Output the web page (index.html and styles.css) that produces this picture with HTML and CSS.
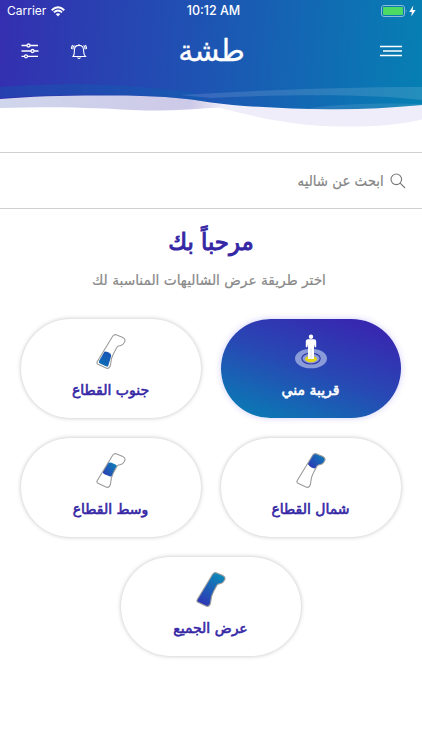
FILE: index.html
```
<!DOCTYPE html>
<html lang="ar" dir="rtl">
<head>
<meta charset="utf-8">
<title>طشة</title>
<link rel="stylesheet" href="styles.css">
</head>
<body>
<svg class="defs" width="0" height="0" aria-hidden="true">
  <defs>
    <linearGradient id="fill" gradientUnits="userSpaceOnUse" x1="5" y1="34" x2="24" y2="2"><stop offset="0" stop-color="#3032b5"/><stop offset="1" stop-color="#0b8ab8"/></linearGradient>
    <linearGradient id="fill-south" gradientUnits="userSpaceOnUse" x1="5" y1="34" x2="14" y2="18"><stop offset="0" stop-color="#0c72b8"/><stop offset="1" stop-color="#1a52b4"/></linearGradient>
    <linearGradient id="fill-north" gradientUnits="userSpaceOnUse" x1="14" y1="14" x2="25" y2="3"><stop offset="0" stop-color="#2b3bb4"/><stop offset="1" stop-color="#1272b8"/></linearGradient>
    <linearGradient id="fill-mid" gradientUnits="userSpaceOnUse" x1="7" y1="21" x2="20" y2="11"><stop offset="0" stop-color="#2b40b4"/><stop offset="1" stop-color="#0f80b8"/></linearGradient>
    <path id="strip" d="M16.800 2Q18.800-.2 20.800 1L26.800 3.400Q29.300 4.500 29 6.800Q27.500 11.500 22.500 12Q21.300 12.300 20.500 14Q17 20 15.500 24.500Q14.800 29 14.500 31Q13.500 35 10.500 34.200L2 30.300Q.3 29.300 1.300 27.400Z"/>
    <clipPath id="strip-clip"><use href="#strip"/></clipPath>
  </defs>
</svg>
<header class="header">
  <svg class="header-bg" viewBox="0 0 422 130" aria-hidden="true">
    <defs>
      <linearGradient id="hg" gradientUnits="userSpaceOnUse" x1="0" y1="30" x2="422" y2="60"><stop offset="0" stop-color="#342fb0"/><stop offset=".5" stop-color="#1d55b3"/><stop offset="1" stop-color="#067fb3"/></linearGradient>
      <linearGradient id="wg" gradientUnits="userSpaceOnUse" x1="0" y1="0" x2="225" y2="0"><stop offset="0" stop-color="#d0d6ec"/><stop offset=".85" stop-color="#cdc9e8"/><stop offset="1" stop-color="#efedf9"/></linearGradient>
    </defs>
    <path fill="#efedf9" d="M190 98 H422 V119.500 C390 127 350 128 309 125 C265 120 240 113 208 105Z"/>
    <path fill="url(#wg)" d="M0 93 H190 L225 104 V107 C195 109 170 111 145 110.500 C110 109 80 107 40 107.300 L0 108Z"/>
    <path fill="url(#hg)" d="M0 0H422V105 C390 108 360 109.500 330 109.300 C290 109 245 107 211 102.500 C185 98 160 96 120 95.500 C75 95 35 96 0 99Z"/>
    <path fill="#0a66b0" opacity=".3" d="M0 87 C70 82 120 84 190 92 L211 102.500 C170 95 90 92 0 98Z"/>
    <path fill="#fff" opacity=".12" d="M180 95 C250 91 330 87 422 87 V100 C375 94 290 94 211 98Z"/>
    <path fill="#fff" opacity=".1" d="M310 108 C350 103 390 103 422 104 V105 C380 109 345 110 310 109Z"/>
  </svg>
  <div class="status" dir="ltr">
    <span class="carrier">Carrier
      <svg width="14" height="11" viewBox="0 0 14 11" fill="none" stroke="#fff" stroke-width="1.900"><path d="M.7 4.200 Q7-1.900 13.300 4.200M2.900 6.400 Q7 2.600 11.100 6.400"/><path d="M7 10.500 4.700 8.100Q7 6.300 9.300 8.100Z" fill="#fff" stroke="none"/></svg>
    </span>
    <span class="time">10:12 AM</span>
    <svg class="battery" width="37" height="13" viewBox="0 0 37 13"><rect x=".5" y=".5" width="23" height="11" rx="2.500" fill="none" stroke="#8abbdc"/><rect x="2" y="2" width="20" height="8" rx="1" fill="#4cd964"/><path d="M24.800 4.200q1.500 1.800 0 3.600z" fill="#8abbdc"/><path d="M32.300 .5 28.300 6.900h2.600L30.300 11.500 34.600 5h-2.900z" fill="#fff"/></svg>
  </div>
  <div class="nav" dir="ltr">
    <div class="tools">
      <svg width="18" height="16" viewBox="0 0 18 16" fill="none" stroke="#fff" stroke-width="1.300"><path d="M.5 2.500H6M9 2.500h8M.5 8H10M13 8h4.500M.5 13.300H3.500M6.500 13.300H17"/><circle cx="7.500" cy="2.500" r="1.500"/><circle cx="11.500" cy="8" r="1.500"/><circle cx="5" cy="13.300" r="1.500"/></svg>
      <svg width="16" height="17" viewBox="0 0 16 17" fill="none" stroke="#fff" stroke-width="1.100"><path d="M2 13.500C3.600 11.500 3.400 10 3.400 7.200C3.400 4 5.200 2.400 8 2.400s4.600 1.600 4.600 4.800c0 2.800-.2 4.300 1.800 6.300zM8 2.400V1M6.500 14.500q1.500 2 3 0M3.400 2.500Q1.700 4 1.900 6.400M1.700 2Q.4 3.500.5 6M12.600 2.500Q14.300 4 14.100 6.400M14.300 2Q15.600 3.500 15.500 6"/></svg>
    </div>
    <h1 class="logo" lang="ar">طشة</h1>
    <svg class="menu" width="22" height="12" viewBox="0 0 22 12" stroke="#fff" stroke-width="1.500"><path d="M0 1.500H22M3 6H22M0 10.500H22"/></svg>
  </div>
</header>
<div class="search">
  <svg width="16" height="16" viewBox="0 0 16 16" fill="none" stroke="#777" stroke-width="1.100"><circle cx="6.300" cy="6.300" r="5.300"/><path d="M10.200 10.200 15 15"/></svg>
  <span class="placeholder">ابحث عن شاليه</span>
</div>
<main>
  <h2 class="title">مرحباً بك</h2>
  <p class="subtitle">اختر طريقة عرض الشاليهات المناسبة لك</p>
  <div class="options">
    <div class="option active">
      <svg class="icon" viewBox="0 0 34 36"><ellipse cx="17" cy="24.500" rx="16" ry="9.800" fill="#8a9bd9"/><ellipse cx="17" cy="24.500" rx="9.200" ry="5.500" fill="none" stroke="#3439a8" stroke-width="1.200"/><ellipse cx="17" cy="25" rx="6" ry="3.300" fill="#e4d51b"/><circle cx="17" cy="2.800" r="2.200" fill="#fff"/><path fill="#fff" d="M14 5.300h6q2.200 0 2.200 2v6h-1.500l-.7-3V25h-6V10.300l-.7 3H11.800v-6q0-2 2.200-2z"/><path d="M17 14V25" stroke="#bdc1df" stroke-width=".5"/></svg>
      <span class="label">قريبة مني</span>
    </div>
    <div class="option">
      <svg class="icon" viewBox="0 0 30 36"><path d="M8.300 17.800Q9.500 17 11.500 17.900Q15.500 19.500 15.200 22L12.200 32Q11.500 33 10 32.300L4 29.600Q2.200 28.500 3 27Z" fill="url(#fill-south)"/><use href="#strip" class="outline"/></svg>
      <span class="label">جنوب القطاع</span>
    </div>
    <div class="option">
      <svg class="icon" viewBox="0 0 30 36"><path d="M11.800 11L17 0H30V12L22 13L19 15.500Q14.500 15 11.800 11Z" fill="url(#fill-north)" clip-path="url(#strip-clip)"/><use href="#strip" class="outline"/></svg>
      <span class="label">شمال القطاع</span>
    </div>
    <div class="option">
      <svg class="icon" viewBox="0 0 30 36"><path d="M11.500 10.500Q13 8.700 15.500 9.800L20 11.800Q21.800 12.800 20.700 15L16.500 22.500Q15.500 24 13.500 23.300L8.500 21.200Q6 20 7 18Z" fill="url(#fill-mid)" clip-path="url(#strip-clip)"/><use href="#strip" class="outline"/></svg>
      <span class="label">وسط القطاع</span>
    </div>
    <div class="option">
      <svg class="icon" viewBox="0 0 30 36"><use href="#strip" class="outline" fill="url(#fill)"/></svg>
      <span class="label">عرض الجميع</span>
    </div>
  </div>
</main>
</body>
</html>
```
FILE: styles.css
```
* { box-sizing: border-box; }
body { margin: 0; width: 422px; height: 750px; overflow: hidden; background: #fff; font-family: "DejaVu Sans", sans-serif; }
.defs { position: absolute; }
.header { position: relative; height: 152px; color: #fff; }
.header-bg { position: absolute; top: 0; left: 0; width: 422px; height: 130px; }
.status { position: relative; display: grid; grid-template-columns: 1fr auto 1fr; align-items: center; height: 22px; padding: 0 4px 0 7px; font: 12px/22px Inter, sans-serif; }
.carrier { display: flex; align-items: center; gap: 5px; }
.time { padding-left: 2px; font-weight: 500; font-size: 12.5px; }
.battery { justify-self: end; }
.nav { position: relative; display: grid; grid-template-columns: 1fr auto 1fr; align-items: center; height: 58px; padding: 0 20px 0 21px; }
.tools { display: flex; align-items: center; gap: 32px; }
.logo { margin: 0; font-size: 30px; font-weight: 400; line-height: 58px; -webkit-text-stroke: .3px; }
.menu { justify-self: end; }
.search { display: flex; align-items: center; gap: 6px; height: 57px; padding: 0 16px; border-top: 1px solid #d0d0d0; border-bottom: 1px solid #d0d0d0; }
.placeholder { color: #858585; font-size: 14.5px; transform: scaleX(.92); transform-origin: right; -webkit-text-stroke: .2px; }
.title { margin: 0; padding-top: 15px; text-align: center; font-size: 23.5px; font-weight: 400; line-height: 36px; color: #3527a5; transform: scaleX(.97); -webkit-text-stroke: 1px; }
.subtitle { margin: 0; text-align: center; font-size: 14px; line-height: 41px; color: #888; white-space: nowrap; transform: translateX(-2px) scaleX(.98); -webkit-text-stroke: .2px; }
.options { display: flex; flex-wrap: wrap; justify-content: center; gap: 20px; padding: 17.5px 21px 0; }
.option { display: flex; flex-direction: column; align-items: center; width: 180px; height: 99px; padding-top: 15px; border-radius: 50px; background: #fff; box-shadow: 0 0 4px rgba(0,0,0,.25); color: #3527a5; }
.option.active { background: linear-gradient(200deg, #3728b0 12%, #2848b4 50%, #087db4 96%); color: #fff; box-shadow: 0 0 6px rgba(70,60,240,.25); }
.icon { height: 36px; flex: none; }
.label { margin-top: 7.5px; font-size: 14px; font-weight: 400; line-height: 26px; white-space: nowrap; transform: translateX(-.5px); -webkit-text-stroke: .6px; }
.outline { stroke: #9b9b9b; stroke-width: 1.1; }
.outline:not([fill]) { fill: none; }
```
